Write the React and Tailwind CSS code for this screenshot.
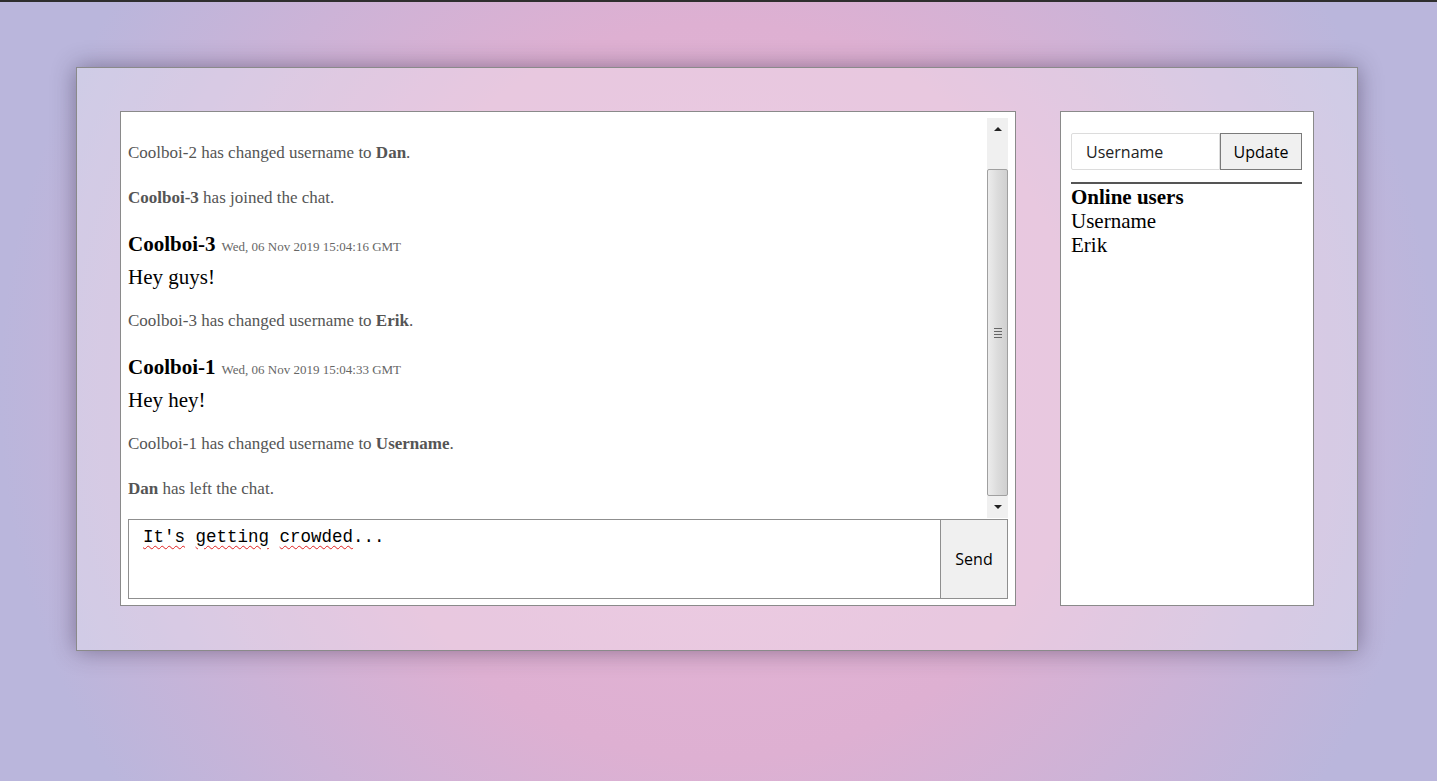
import React from "react";

const serif = "font-['Liberation_Serif','Times_New_Roman',serif]";
const sans = "font-['Open_Sans','Noto_Sans',sans-serif]";

const feed = [
  { type: "sys", mt: "mt-[25px]", parts: [["Coolboi-2 has changed username to ", false], ["Dan", true], [".", false]] },
  { type: "sys", mt: "mt-[25px]", parts: [["Coolboi-3", true], [" has joined the chat.", false]] },
  { type: "msg", mt: "mt-[24px]", name: "Coolboi-3", time: "Wed, 06 Nov 2019 15:04:16 GMT", text: "Hey guys!" },
  { type: "sys", mt: "mt-[22px]", parts: [["Coolboi-3 has changed username to ", false], ["Erik", true], [".", false]] },
  { type: "msg", mt: "mt-[24px]", name: "Coolboi-1", time: "Wed, 06 Nov 2019 15:04:33 GMT", text: "Hey hey!" },
  { type: "sys", mt: "mt-[22px]", parts: [["Coolboi-1 has changed username to ", false], ["Username", true], [".", false]] },
  { type: "sys", mt: "mt-[25px]", parts: [["Dan", true], [" has left the chat.", false]] },
];

function SystemLine({ item }) {
  return (
    <p className={`${item.mt} h-[20px] text-[17px] leading-[20px] text-[#555]`}>
      {item.parts.map(([t, bold], i) =>
        bold ? <b key={i} className="font-bold">{t}</b> : <span key={i}>{t}</span>
      )}
    </p>
  );
}

function ChatMessage({ item }) {
  return (
    <div className={item.mt}>
      <div className="flex h-[24px] items-baseline gap-[6px] leading-[24px]">
        <span className="text-[21px] font-bold text-black">{item.name}</span>
        <span className="text-[13px] text-[#666]">{item.time}</span>
      </div>
      <p className="mt-[9px] h-[24px] text-[21px] leading-[24px] text-black">{item.text}</p>
    </div>
  );
}

function Scrollbar() {
  return (
    <div className="flex w-[21px] flex-col bg-[#f0f0f0]">
      <div className="flex h-[22px] items-center justify-center">
        <div className="h-0 w-0 border-x-[4px] border-b-[4px] border-x-transparent border-b-[#222]" />
      </div>
      <div className="h-[29px]" />
      <div className="flex flex-1 items-center justify-center rounded-[2px] border border-[#a0a0a0] bg-[linear-gradient(to_right,#ececec,#dcdcdc_50%,#d0d0d0)]">
        <div className="flex flex-col gap-[2px]">
          <div className="h-px w-[8px] bg-[#666]" />
          <div className="h-px w-[8px] bg-[#666]" />
          <div className="h-px w-[8px] bg-[#666]" />
          <div className="h-px w-[8px] bg-[#666]" />
        </div>
      </div>
      <div className="flex h-[22px] items-center justify-center">
        <div className="h-0 w-0 border-x-[4px] border-t-[4px] border-x-transparent border-t-[#222]" />
      </div>
    </div>
  );
}

export default function App() {
  return (
    <div className="h-[781px] w-full overflow-hidden border-t-2 border-[#2e2e2e] bg-[radial-gradient(circle_farthest-corner_at_50%_50%,#e6b6d6_0%,#deb0d2_45%,#bab6dc_88%)]">
      <div className="ml-[76px] mt-[65px] flex h-[584px] w-[1282px] gap-[44px] border border-[#8a8a8a] bg-white/30 pt-[43px] pr-[43px] pb-[44px] pl-[43px] shadow-[0_0_22px_rgba(40,30,60,0.45)]">
        {/* Chat panel */}
        <div className="flex w-[896px] flex-col border border-[#8a8a8a] bg-white px-[7px] pt-[6px] pb-[6px]">
          <div className="flex h-[400px]">
            <div className={`flex-1 overflow-hidden ${serif}`}>
              {feed.map((item, i) =>
                item.type === "sys" ? <SystemLine key={i} item={item} /> : <ChatMessage key={i} item={item} />
              )}
            </div>
            <Scrollbar />
          </div>
          <div className="mt-[1px] flex h-[80px] border border-[#8f8f8f]">
            <div className="flex-1 bg-white pl-[14px] pt-[6px] font-['Liberation_Mono','Courier_New',monospace] text-[17.5px] leading-[22px] text-black">
              <span className="underline decoration-[#e02020] decoration-wavy decoration-1 underline-offset-[3px]">It's</span>{" "}
              <span className="underline decoration-[#e02020] decoration-wavy decoration-1 underline-offset-[3px]">getting</span>{" "}
              <span className="underline decoration-[#e02020] decoration-wavy decoration-1 underline-offset-[3px]">crowded</span>...
            </div>
            <button className={`w-[67px] border-l border-[#8f8f8f] bg-[#f0f0f0] text-[16px] text-black ${sans}`}>
              Send
            </button>
          </div>
        </div>

        {/* Users panel */}
        <div className="flex w-[254px] flex-col border border-[#8a8a8a] bg-white pt-[21px] pr-[11px] pl-[10px]">
          <div className="flex h-[37px]">
            <div className={`flex w-[149px] items-center rounded-l-[2px] border border-[#dcdcdc] pl-[14px] text-[16px] text-[#222] ${sans}`}>
              Username
            </div>
            <button className={`flex-1 border border-[#7a7a7a] bg-[#f0f0f0] text-[16px] text-black ${sans}`}>
              Update
            </button>
          </div>
          <div className="mt-[12px] h-[2px] bg-[#555]" />
          <div className={`mt-[1px] text-[21px] leading-[24px] text-black ${serif}`}>
            <p className="font-bold">Online users</p>
            <p>Username</p>
            <p>Erik</p>
          </div>
        </div>
      </div>
    </div>
  );
}
